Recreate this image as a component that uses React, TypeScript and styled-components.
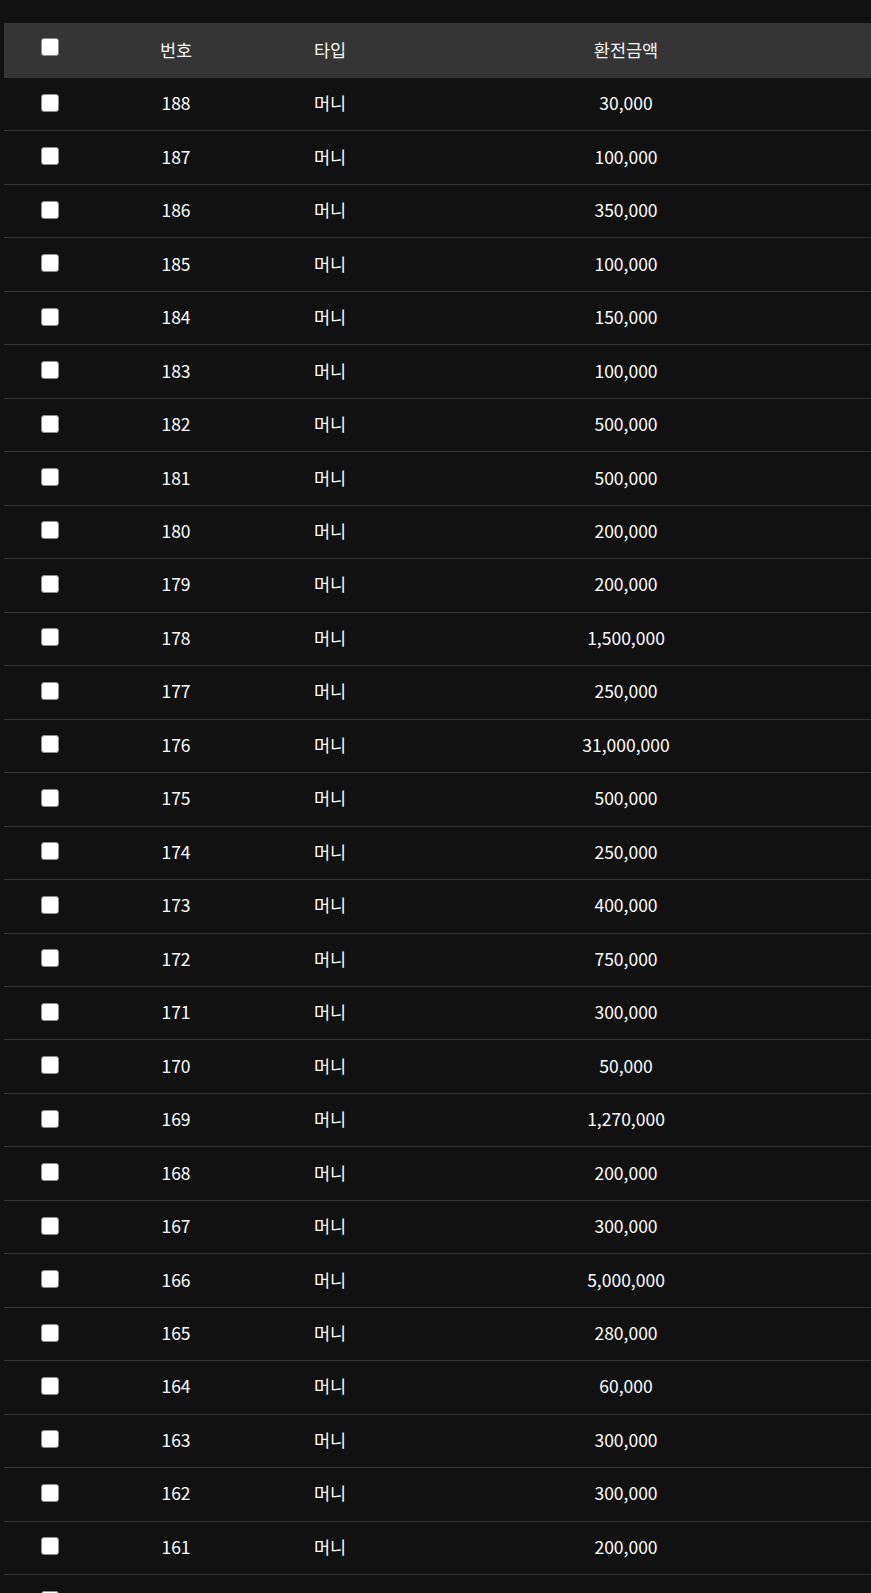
import styled, { createGlobalStyle } from 'styled-components';

const ROWS: [number, string][] = [
  [188, '30,000'],
  [187, '100,000'],
  [186, '350,000'],
  [185, '100,000'],
  [184, '150,000'],
  [183, '100,000'],
  [182, '500,000'],
  [181, '500,000'],
  [180, '200,000'],
  [179, '200,000'],
  [178, '1,500,000'],
  [177, '250,000'],
  [176, '31,000,000'],
  [175, '500,000'],
  [174, '250,000'],
  [173, '400,000'],
  [172, '750,000'],
  [171, '300,000'],
  [170, '50,000'],
  [169, '1,270,000'],
  [168, '200,000'],
  [167, '300,000'],
  [166, '5,000,000'],
  [165, '280,000'],
  [164, '60,000'],
  [163, '300,000'],
  [162, '300,000'],
  [161, '200,000'],
];

const GlobalStyle = createGlobalStyle`
  html, body {
    margin: 0;
    background-color: #111111;
    overflow-x: hidden;
  }
`;

export default function App() {
  return (
    <>
      <GlobalStyle />
      <Wrapper>
        <HeaderRow>
          <Cell>
            <Check type="checkbox" $lift />
          </Cell>
          <Cell>{'번호'}</Cell>
          <Cell>{'타입'}</Cell>
          <Cell>{'환전금액'}</Cell>
          <Cell />
        </HeaderRow>
        {ROWS.map(([no, amount]) => (
          <BodyRow key={no}>
            <Cell>
              <Check type="checkbox" />
            </Cell>
            <Cell>{no}</Cell>
            <Cell>{'머니'}</Cell>
            <Cell>{amount}</Cell>
            <Cell />
          </BodyRow>
        ))}
        {/* next row, only its checkbox peeks in at the bottom */}
        <BodyRow>
          <Cell>
            <Check type="checkbox" />
          </Cell>
        </BodyRow>
      </Wrapper>
    </>
  );
}

const Wrapper = styled.div`
  display: flex;
  flex-direction: column;
  padding: 23px 0 0 4px;
  font-family: 'Noto Sans CJK KR', 'Noto Sans', sans-serif;
  font-size: 17.5px;
  color: #ffffff;
`;

const HeaderRow = styled.div`
  display: grid;
  grid-template-columns: 92px 160px 148px 444px 1fr;
  box-sizing: border-box;
  height: 55px;
  padding-bottom: 3px;
  background-color: #353535;
  color: #f2f2f2;
`;

const BodyRow = styled.div`
  display: grid;
  grid-template-columns: 92px 160px 148px 444px 1fr;
  box-sizing: border-box;
  height: 53.47px;
  padding-bottom: 3px;
  border-bottom: 1px solid #343434;
`;

const Cell = styled.div`
  display: flex;
  align-items: center;
  justify-content: center;
  white-space: nowrap;
`;

const Check = styled.input<{ $lift?: boolean }>`
  appearance: none;
  box-sizing: border-box;
  width: 18px;
  height: 18px;
  margin: 0 0 ${({ $lift }) => ($lift ? '4px' : '0')} 0;
  background-color: #ffffff;
  border: 1.5px solid #8c8c8c;
  border-radius: 3px;
`;
